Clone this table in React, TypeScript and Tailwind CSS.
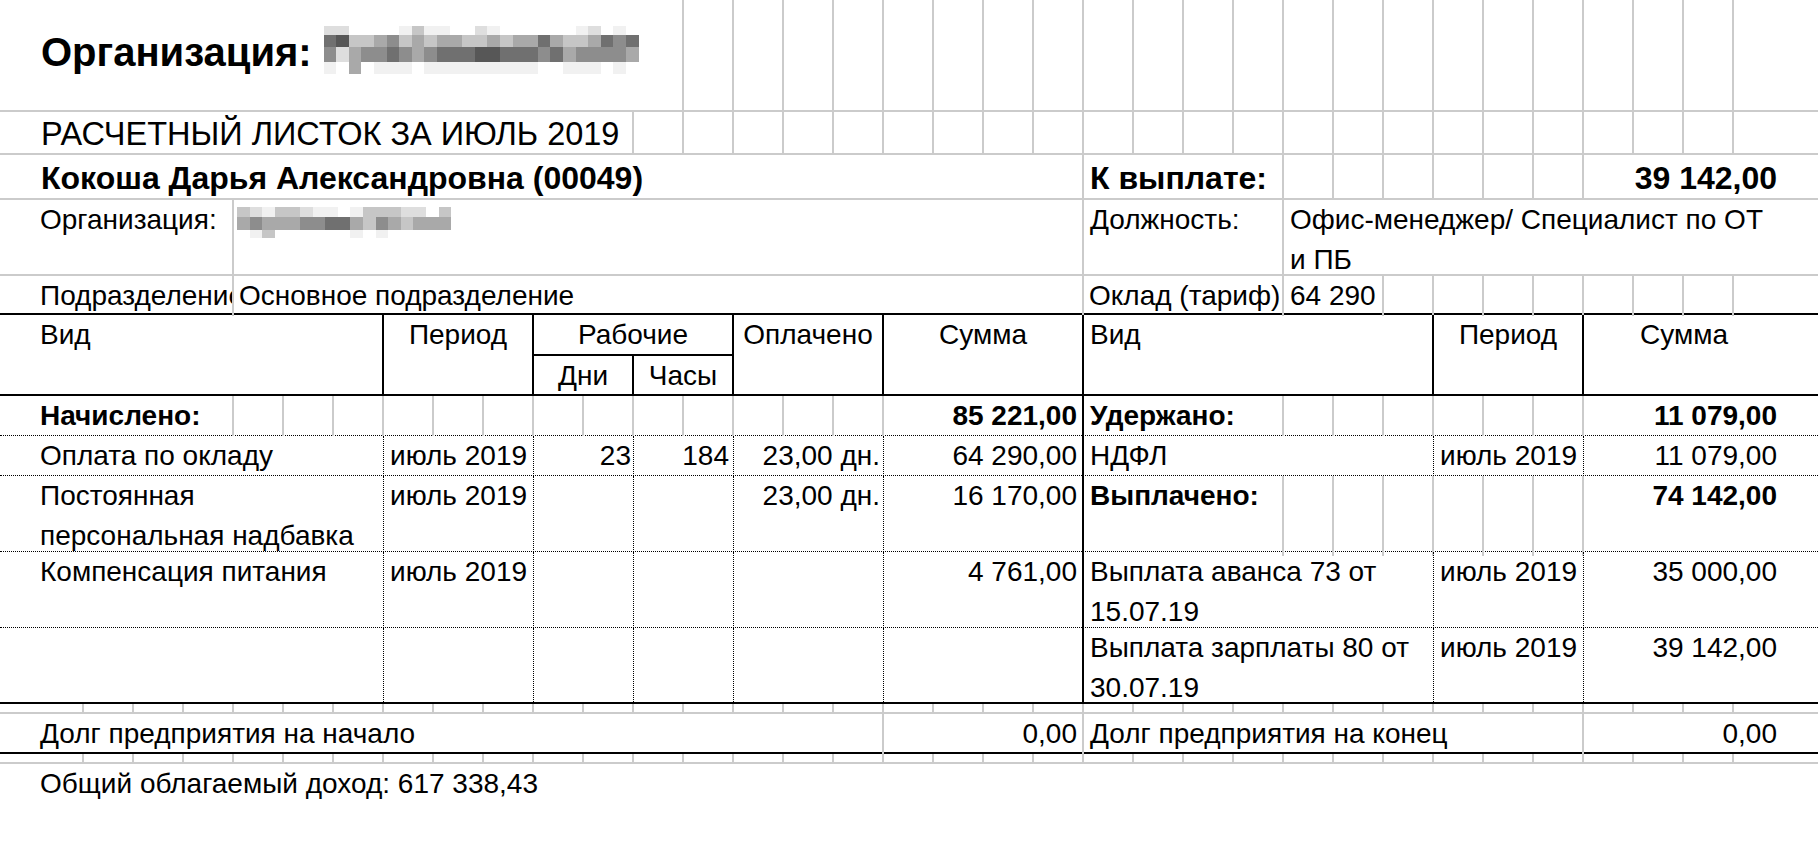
import React from "react";

const GRID = "grid grid-cols-[84px_repeat(34,50px)_34px]";

const SHADES = [
  "bg-white",
  "bg-[#f1f1f1]",
  "bg-[#dedede]",
  "bg-[#c6c6c6]",
  "bg-[#a9a9a9]",
  "bg-[#8d8d8d]",
  "bg-[#707070]",
  "bg-[#575757]",
];

// pixelated (blurred) organisation name
function Mosaic({ rows }: { rows: { h: string; p: string }[] }) {
  return (
    <div className="flex flex-col">
      {rows.map((r, i) => (
        <div key={i} className={`flex ${r.h}`}>
          {r.p.split("").map((d, j) => (
            <div key={j} className={`w-[12.6px] ${SHADES[Number(d)]}`} />
          ))}
        </div>
      ))}
    </div>
  );
}

const titleBlur = [
  { h: "h-[9px]", p: "2200001311002100000012010" },
  { h: "h-[12px]", p: "6733453434433434464334656" },
  { h: "h-[15px]", p: "5245565456667766656455554" },
  { h: "h-[12px]", p: "1040111011111111100111010" },
];

const orgBlur = [
  { h: "h-[10px]", p: "32133211013332203" },
  { h: "h-[13px]", p: "45444556643543444" },
  { h: "h-[8px]", p: "01300000010100000" },
];

function Gray({ n }: { n: number }) {
  return (
    <>
      {Array.from({ length: n }).map((_, i) => (
        <div key={i} className="border-r-2 border-[#cbcbcb]" />
      ))}
    </>
  );
}

type Line = {
  vid: React.ReactNode;
  period?: string;
  days?: string;
  hours?: string;
  paid?: string;
  sum?: string;
};

function LeftPart({ l }: { l: Line }) {
  return (
    <>
      <div className="col-span-7 border-r border-dotted border-black pl-[40px] whitespace-nowrap">{l.vid}</div>
      <div className="col-span-3 border-r border-dotted border-black pl-[6px] whitespace-nowrap">{l.period}</div>
      <div className="col-span-2 border-r border-dotted border-black pr-[2px] text-right">{l.days}</div>
      <div className="col-span-2 border-r border-dotted border-black pr-[4px] text-right">{l.hours}</div>
      <div className="col-span-3 border-r border-dotted border-black pr-[3px] text-right whitespace-nowrap">{l.paid}</div>
      <div className="col-span-4 border-r-2 border-black pr-[5px] text-right whitespace-nowrap">{l.sum}</div>
    </>
  );
}

function RightPart({ vid, period, sum }: { vid?: React.ReactNode; period?: string; sum?: string }) {
  return (
    <>
      <div className="col-span-7 border-r border-dotted border-black pl-[6px] whitespace-nowrap">{vid}</div>
      <div className="col-span-3 border-r border-dotted border-black pl-[6px] whitespace-nowrap">{period}</div>
      <div className="col-span-4 pr-[7px] text-right whitespace-nowrap">{sum}</div>
      <div />
    </>
  );
}

function Ticks() {
  return (
    <div className={`${GRID} h-[10px] border-b-2 border-[#cbcbcb]`}>
      <Gray n={34} />
      <div className="col-span-2" />
    </div>
  );
}

export default function App() {
  return (
    <div className="w-[1818px] h-[852px] overflow-hidden bg-white text-black text-[28px] leading-[40px] [font-family:'Liberation_Sans',Arial,sans-serif]">
      {/* title */}
      <div className={`${GRID} h-[112px] border-b-2 border-[#cbcbcb]`}>
        <div className="col-span-13 border-r-2 border-[#cbcbcb] pl-[41px] pt-[26px] flex items-start gap-[12px]">
          <span className="text-[40px] leading-[52px] font-bold whitespace-nowrap">Организация:</span>
          <Mosaic rows={titleBlur} />
        </div>
        <Gray n={21} />
        <div className="col-span-2" />
      </div>

      <div className={`${GRID} h-[43px] border-b-2 border-[#cbcbcb]`}>
        <div className="col-span-12 border-r-2 border-[#cbcbcb] pl-[41px] pt-[2px] text-[32.5px] whitespace-nowrap">
          РАСЧЕТНЫЙ ЛИСТОК ЗА ИЮЛЬ 2019
        </div>
        <Gray n={22} />
        <div className="col-span-2" />
      </div>

      <div className={`${GRID} h-[45px] border-b-2 border-[#cbcbcb] font-bold text-[32px]`}>
        <div className="col-span-21 border-r-2 border-[#cbcbcb] pl-[41px] pt-[3px] whitespace-nowrap">
          Кокоша Дарья Александровна (00049)
        </div>
        <div className="col-span-4 border-r-2 border-[#cbcbcb] pl-[6px] pt-[3px] whitespace-nowrap">К выплате:</div>
        <Gray n={6} />
        <div className="col-span-4 pr-[7px] pt-[3px] text-right">39 142,00</div>
        <div />
      </div>

      <div className={`${GRID} h-[76px] border-b-2 border-[#cbcbcb]`}>
        <div className="col-span-4 border-r-2 border-[#cbcbcb] pl-[40px] whitespace-nowrap">Организация:</div>
        <div className="col-span-17 border-r-2 border-[#cbcbcb] pl-[3px] pt-[7px]">
          <Mosaic rows={orgBlur} />
        </div>
        <div className="col-span-4 border-r-2 border-[#cbcbcb] pl-[6px] whitespace-nowrap">Должность:</div>
        <div className="col-span-10 pl-[6px] whitespace-nowrap">
          Офис-менеджер/ Специалист по ОТ
          <br />и ПБ
        </div>
        <div />
      </div>

      <div className={`${GRID} h-[39px] border-b-2 border-black`}>
        <div className="col-span-4 border-r-2 border-[#cbcbcb] pl-[40px] whitespace-nowrap overflow-hidden">Подразделение</div>
        <div className="col-span-17 border-r-2 border-[#cbcbcb] pl-[5px] whitespace-nowrap">Основное подразделение</div>
        <div className="col-span-4 border-r-2 border-[#cbcbcb] pl-[5px] whitespace-nowrap overflow-hidden">Оклад (тариф):</div>
        <div className="col-span-2 border-r-2 border-[#cbcbcb] pl-[6px] whitespace-nowrap">64 290</div>
        <Gray n={7} />
        <div className="col-span-2" />
      </div>

      {/* table header */}
      <div className={`${GRID} grid-rows-[41px_38px] h-[81px] border-b-2 border-black`}>
        <div className="col-span-7 row-span-2 border-r-2 border-black pl-[40px]">Вид</div>
        <div className="col-span-3 row-span-2 border-r-2 border-black text-center">Период</div>
        <div className="col-span-4 border-r-2 border-b-2 border-black text-center">Рабочие</div>
        <div className="col-span-3 row-span-2 border-r-2 border-black text-center">Оплачено</div>
        <div className="col-span-4 row-span-2 border-r-2 border-black text-center">Сумма</div>
        <div className="col-span-7 row-span-2 border-r-2 border-black pl-[6px]">Вид</div>
        <div className="col-span-3 row-span-2 border-r-2 border-black text-center">Период</div>
        <div className="col-span-4 row-span-2 text-center">Сумма</div>
        <div className="row-span-2" />
        <div className="col-start-11 row-start-2 col-span-2 border-r-2 border-black text-center">Дни</div>
        <div className="col-start-13 row-start-2 col-span-2 border-r-2 border-black text-center">Часы</div>
      </div>

      {/* totals: accrued / withheld */}
      <div className={`${GRID} h-[40px] border-b border-dotted border-black font-bold`}>
        <div className="col-span-4 border-r-2 border-[#cbcbcb] pl-[40px] whitespace-nowrap">Начислено:</div>
        <Gray n={13} />
        <div className="col-span-4 border-r-2 border-black pr-[5px] text-right">85 221,00</div>
        <div className="col-span-4 border-r-2 border-[#cbcbcb] pl-[6px] whitespace-nowrap">Удержано:</div>
        <Gray n={6} />
        <div className="col-span-4 pr-[7px] text-right">11 079,00</div>
        <div />
      </div>

      <div className={`${GRID} h-[40px] border-b border-dotted border-black`}>
        <LeftPart
          l={{ vid: "Оплата по окладу", period: "июль 2019", days: "23", hours: "184", paid: "23,00 дн.", sum: "64 290,00" }}
        />
        <RightPart vid="НДФЛ" period="июль 2019" sum="11 079,00" />
      </div>

      <div className={`${GRID} h-[76px] border-b border-dotted border-black`}>
        <LeftPart
          l={{
            vid: (
              <>
                Постоянная
                <br />
                персональная надбавка
              </>
            ),
            period: "июль 2019",
            paid: "23,00 дн.",
            sum: "16 170,00",
          }}
        />
        <div className="col-span-4 border-r-2 border-[#cbcbcb] pl-[6px] font-bold whitespace-nowrap">Выплачено:</div>
        <Gray n={6} />
        <div className="col-span-4 pr-[7px] text-right font-bold">74 142,00</div>
        <div />
      </div>

      <div className={`${GRID} h-[76px] border-b border-dotted border-black`}>
        <LeftPart l={{ vid: "Компенсация питания", period: "июль 2019", sum: "4 761,00" }} />
        <RightPart
          vid={
            <>
              Выплата аванса 73 от
              <br />
              15.07.19
            </>
          }
          period="июль 2019"
          sum="35 000,00"
        />
      </div>

      <div className={`${GRID} h-[76px] border-b-2 border-black`}>
        <LeftPart l={{ vid: "" }} />
        <RightPart
          vid={
            <>
              Выплата зарплаты 80 от
              <br />
              30.07.19
            </>
          }
          period="июль 2019"
          sum="39 142,00"
        />
      </div>

      <Ticks />

      <div className={`${GRID} h-[40px] border-b-2 border-black`}>
        <div className="col-span-17 border-r-2 border-[#cbcbcb] pl-[40px] whitespace-nowrap">Долг предприятия на начало</div>
        <div className="col-span-4 border-r-2 border-[#cbcbcb] pr-[5px] text-right">0,00</div>
        <div className="col-span-10 border-r-2 border-[#cbcbcb] pl-[6px] whitespace-nowrap">Долг предприятия на конец</div>
        <div className="col-span-4 pr-[7px] text-right">0,00</div>
        <div />
      </div>

      <Ticks />

      <div className="pl-[40px] h-[44px] whitespace-nowrap">Общий облагаемый доход: 617 338,43</div>
    </div>
  );
}
